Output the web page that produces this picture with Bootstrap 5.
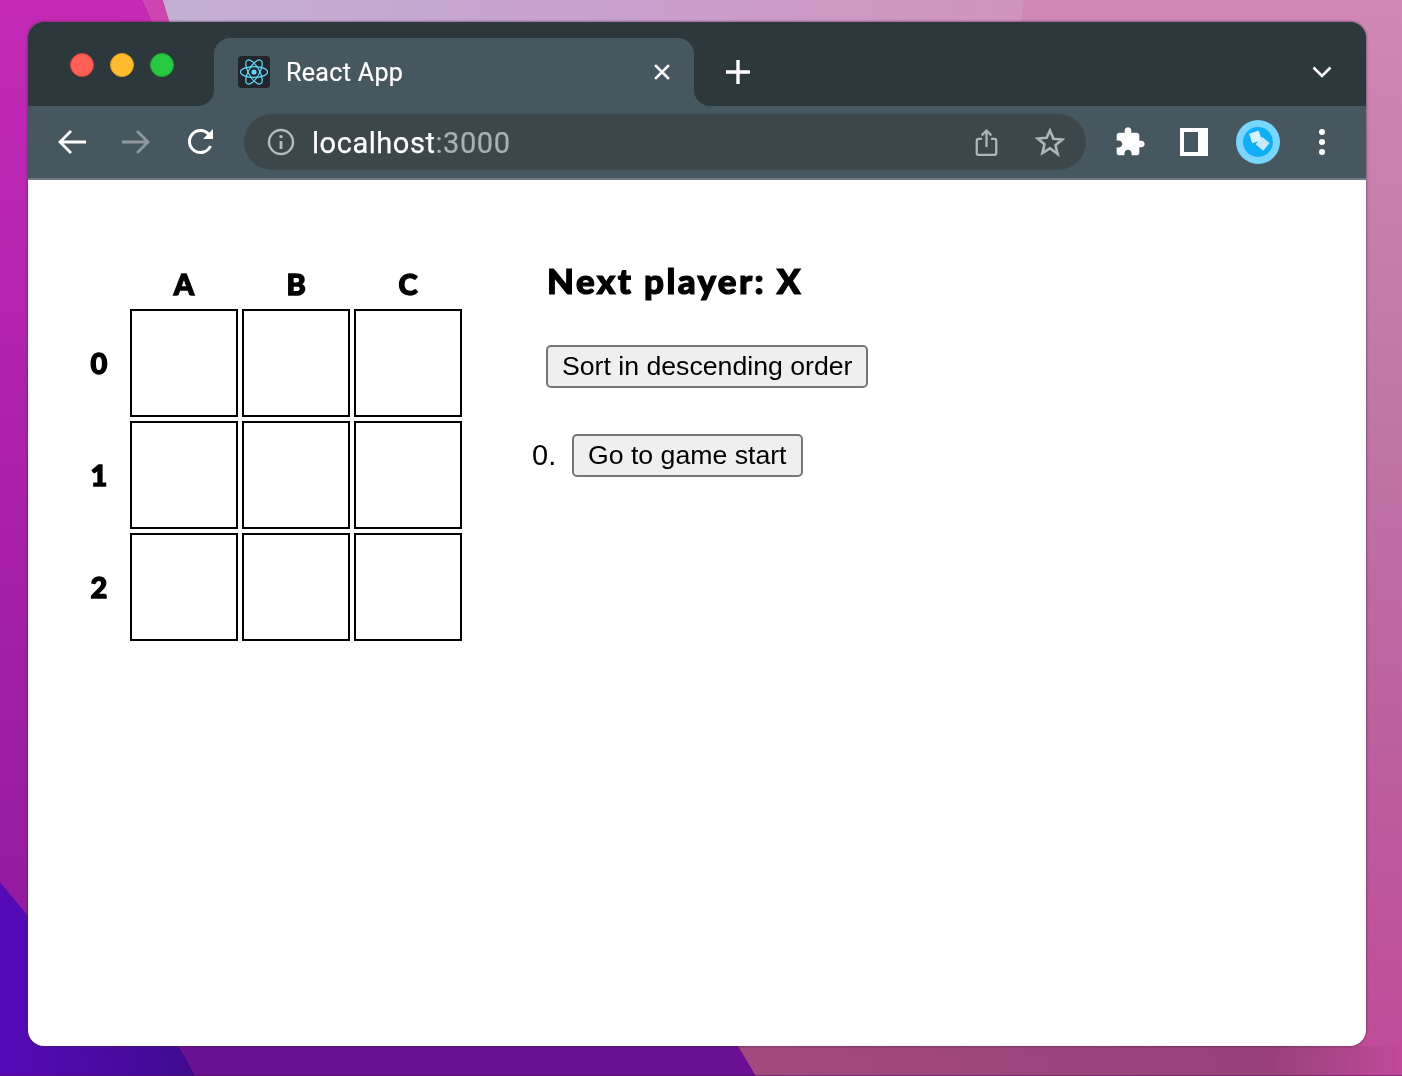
<!DOCTYPE html>
<html lang="en">
<head>
    <meta charset="UTF-8">
    <meta name="viewport" content="width=device-width, initial-scale=1.0">
    <title>React App</title>
    <link rel="stylesheet" href="https://cdn.jsdelivr.net/npm/bootstrap@5.3.0/dist/css/bootstrap.min.css">
    <style>
        html, body { height: 100%; }
        body { background: #a02aa8; padding: 22px 36px 30px 28px; overflow: hidden; }
        .wallpaper { position: fixed; top: 0; left: 0; z-index: -1; }

        .browser { height: 1024px; border-radius: 16px; overflow: hidden; background: #fff; box-shadow: 0 0 2px 1px rgba(70, 40, 70, .45); }

        /* title bar */
        .titlebar { height: 84px; background: linear-gradient(#2d383c 50%, #47575f 50%); }
        .title-left { width: 186px; background: #2d383c; border-bottom-right-radius: 16px; padding: 31px 0 0 42px; }
        .light { width: 24px; height: 24px; border-radius: 50%; }
        .light-red { background: #ff5f57; border: 1px solid #d8413c; }
        .light-yellow { background: #febc2e; border: 1px solid #d99d22; }
        .light-green { background: #28c840; border: 1px solid #1ea832; }
        .tab-item { width: 480px; height: 68px; margin-top: 16px; background: #47575f; border-radius: 16px 16px 0 0; padding: 0 23px 0 24px; color: #fff; font: 400 25px Roboto, sans-serif; }
        .favicon { width: 32px; height: 32px; background: #20262b; border-radius: 4px; margin-right: 16px; }
        .title-right { background: #2d383c; border-bottom-left-radius: 16px; padding: 0 34px 0 32px; }
        .title-text { letter-spacing: .35px; -webkit-text-stroke: .2px #fff; }

        /* toolbar */
        .toolbar { height: 74px; background: #47575f; border-bottom: 2px solid #6d7b82; padding: 8px 12px 0; }
        .tool-slot { width: 64px; height: 56px; }
        .omnibox { width: 842px; height: 56px; margin: 0 12px; background: #3c474c; border-radius: 28px; padding: 0 4px 0 22px; font: 400 29px Roboto, sans-serif; color: #fff; }
        .url-text { margin-left: 16px; padding-top: 1px; letter-spacing: .55px; -webkit-text-stroke: .25px #fff; }
        .url-port { color: #a9b0b3; -webkit-text-stroke: .2px #a9b0b3; }

        /* game */
        .game-area { padding: 80px 0 0 44px; color: #000; }
        .board-grid { display: grid; grid-template-columns: 54px repeat(3, 108px); grid-template-rows: 45px repeat(3, 108px); gap: 4px; }
        .board-label { font: 900 29px Lato, sans-serif; color: #000; -webkit-text-stroke: 1.3px #000; }
        .col-label { padding-top: 2px; }
        .row-label { padding-bottom: 2px; }
        .cell-box { background: #fff; border: 2px solid #000; }
        .game-info { margin-left: 84px; }
        .next-player { font: 900 35px Lato, sans-serif; margin: 0 0 43px 1px; line-height: 42px; letter-spacing: 2.38px; -webkit-text-stroke: 1.2px #000; transform: translateY(-1px); }
        .plain-btn { height: 43px; padding: 0 14px; background: #efefef; border: 2px solid #767676; border-radius: 5px; color: #000; font: 400 26.67px "Liberation Sans", sans-serif; line-height: 1; }
        .moves-list { margin: 46px 0 0 -14px; padding: 0; list-style: none; font: 400 29px "Liberation Sans", sans-serif; }
        .move-num { width: 40px; }
    </style>
</head>
<body>
    <svg class="wallpaper" width="1402" height="1076" viewBox="0 0 1402 1076" aria-hidden="true">
        <defs>
            <linearGradient id="leftSide" x1="0" y1="0" x2="0" y2="1">
                <stop offset="0" stop-color="#c42ab6"/>
                <stop offset=".5" stop-color="#a81fa8"/>
                <stop offset="1" stop-color="#8a1a9c"/>
            </linearGradient>
            <linearGradient id="rightSide" x1="0" y1="0" x2="0" y2="1">
                <stop offset="0" stop-color="#cf88b4"/>
                <stop offset=".35" stop-color="#c078a8"/>
                <stop offset=".7" stop-color="#bc5f9e"/>
                <stop offset="1" stop-color="#c04a98"/>
            </linearGradient>
            <linearGradient id="topBand" x1="0" y1="0" x2="1" y2="0">
                <stop offset="0" stop-color="#c3b0d2"/>
                <stop offset=".5" stop-color="#c8a0cc"/>
                <stop offset="1" stop-color="#d093be"/>
            </linearGradient>
            <linearGradient id="purpleCorner" x1="0" y1="0" x2="1" y2="0">
                <stop offset="0" stop-color="#560ab8"/>
                <stop offset="1" stop-color="#3e0a8e"/>
            </linearGradient>
            <linearGradient id="bottomRight" x1="0" y1="0" x2="1" y2="0">
                <stop offset="0" stop-color="#a24a80"/>
                <stop offset=".8" stop-color="#98407a"/>
                <stop offset="1" stop-color="#c04a98"/>
            </linearGradient>
        </defs>
        <rect width="1402" height="1076" fill="url(#rightSide)"/>
        <rect width="120" height="1076" fill="url(#leftSide)"/>
        <polygon points="120,0 143,0 156,30 120,30" fill="#c42ab6"/>
        <polygon points="143,0 163,0 172,30 156,30" fill="#cf45b0"/>
        <polygon points="163,0 1024,0 1020,30 172,30" fill="url(#topBand)"/>
        <polygon points="0,882 28,916 28,1030 170,1030 196,1076 0,1076" fill="url(#purpleCorner)"/>
        <polygon points="170,1030 730,1030 756,1076 196,1076" fill="#6a1092"/>
        <polygon points="738,1046 1402,1046 1402,1076 756,1076" fill="url(#bottomRight)"/>
        <rect y="1075" width="1402" height="1" fill="#5a0a60" opacity=".5"/>
    </svg>

    <div class="browser d-flex flex-column">
        <div class="titlebar d-flex">
            <div class="title-left d-flex gap-0">
                <div class="light light-red"></div>
                <div class="light light-yellow ms-3"></div>
                <div class="light light-green ms-3"></div>
            </div>
            <div class="tab-item d-flex align-items-center">
                <div class="favicon d-flex align-items-center justify-content-center">
                    <svg width="30" height="30" viewBox="0 0 30 30" fill="none" stroke="#61dafb" stroke-width="1.2">
                        <ellipse cx="15" cy="15" rx="13.5" ry="5.4"/>
                        <ellipse cx="15" cy="15" rx="13.5" ry="5.4" transform="rotate(60 15 15)"/>
                        <ellipse cx="15" cy="15" rx="13.5" ry="5.4" transform="rotate(120 15 15)"/>
                        <circle cx="15" cy="15" r="2.6" fill="#61dafb" stroke="none"/>
                    </svg>
                </div>
                <span class="title-text flex-grow-1">React App</span>
                <svg width="18" height="18" viewBox="0 0 18 18" stroke="#fff" stroke-width="2.6" stroke-linecap="square">
                    <path d="M3 3L15 15M15 3L3 15"/>
                </svg>
            </div>
            <div class="title-right flex-grow-1 d-flex align-items-center justify-content-between pt-3">
                <svg width="24" height="24" viewBox="0 0 24 24" stroke="#fff" stroke-width="3.4" fill="none">
                    <path d="M0 12H24M12 0V24"/>
                </svg>
                <svg width="20" height="12" viewBox="0 0 20 12" stroke="#fff" stroke-width="2.6" fill="none">
                    <path d="M1.5 1.5L10 10L18.5 1.5"/>
                </svg>
            </div>
        </div>

        <div class="toolbar d-flex">
            <div class="tool-slot d-flex align-items-center justify-content-center">
                <svg width="30" height="26" viewBox="0 0 30 26" stroke="#fff" stroke-width="2.8" fill="none">
                    <path d="M29 13H3M14 2L3 13L14 24"/>
                </svg>
            </div>
            <div class="tool-slot d-flex align-items-center justify-content-center">
                <svg width="30" height="26" viewBox="0 0 30 26" stroke="#8e989d" stroke-width="2.8" fill="none">
                    <path d="M1 13H27M16 2L27 13L16 24"/>
                </svg>
            </div>
            <div class="tool-slot d-flex align-items-center justify-content-center">
                <svg width="30" height="30" viewBox="0 0 30 30" fill="none">
                    <path d="M25.5 19a11 11 0 1 1-1.6-11.6" stroke="#fff" stroke-width="3"/>
                    <path d="M28 2v10H18z" fill="#fff"/>
                </svg>
            </div>
            <div class="omnibox d-flex align-items-center">
                <svg width="30" height="30" viewBox="0 0 30 30" fill="none">
                    <circle cx="15" cy="15" r="12" stroke="#b4babd" stroke-width="2.4"/>
                    <path d="M15 14v8" stroke="#b4babd" stroke-width="2.8"/>
                    <circle cx="15" cy="9.6" r="1.7" fill="#b4babd"/>
                </svg>
                <span class="url-text flex-grow-1">localhost<span class="url-port">:3000</span></span>
                <div class="tool-slot d-flex align-items-center justify-content-center">
                    <svg width="23" height="29" viewBox="0 0 26 32" fill="none" stroke="#aeb4b7" stroke-width="2.6">
                        <path d="M8 12H4a2 2 0 0 0-2 2v14a2 2 0 0 0 2 2h18a2 2 0 0 0 2-2V14a2 2 0 0 0-2-2h-4"/>
                        <path d="M13 21V3M7.5 8L13 2.5L18.5 8"/>
                    </svg>
                </div>
                <div class="tool-slot d-flex align-items-center justify-content-center">
                    <svg width="30" height="30" viewBox="0 0 30 30" fill="none" stroke="#aeb4b7" stroke-width="2.6" stroke-linejoin="miter">
                        <path d="M15 3.5l3.4 8.3 8.9.7-6.8 5.8 2.1 8.7L15 21.3 7.4 26l2.1-8.7-6.8-5.8 8.9-.7z"/>
                    </svg>
                </div>
            </div>
            <div class="tool-slot d-flex align-items-center justify-content-center">
                <svg width="32" height="32" viewBox="0 0 24 24" fill="#fff">
                    <path d="M20.5 11H19V7c0-1.1-.9-2-2-2h-4V3.5C13 2.12 11.88 1 10.5 1S8 2.12 8 3.5V5H4c-1.1 0-1.99.9-1.99 2v3.8H3.5c1.49 0 2.7 1.21 2.7 2.7s-1.21 2.7-2.7 2.7H2V20c0 1.1.9 2 2 2h3.8v-1.5c0-1.49 1.21-2.7 2.7-2.7 1.49 0 2.7 1.21 2.7 2.7V22H17c1.1 0 2-.9 2-2v-4h1.5c1.38 0 2.5-1.12 2.5-2.5S21.88 11 20.5 11z"/>
                </svg>
            </div>
            <div class="tool-slot d-flex align-items-center justify-content-center">
                <svg width="28" height="28" viewBox="0 0 28 28">
                    <rect width="28" height="28" fill="#fff"/>
                    <rect x="4" y="4" width="14" height="20" fill="#47575f"/>
                </svg>
            </div>
            <div class="tool-slot d-flex align-items-center justify-content-center">
                <svg width="44" height="44" viewBox="0 0 44 44">
                    <circle cx="22" cy="22" r="22" fill="#78d6ff"/>
                    <circle cx="22" cy="22" r="15" fill="#10aef5"/>
                    <rect x="14.5" y="12" width="10" height="10" fill="#d6f1ff" transform="rotate(-18 19 17)"/>
                    <rect x="21.5" y="19" width="10" height="10" fill="#c4ebff" transform="rotate(40 27 24)"/>
                </svg>
            </div>
            <div class="tool-slot d-flex align-items-center justify-content-center">
                <svg width="8" height="30" viewBox="0 0 8 30" fill="#fff">
                    <circle cx="4" cy="5" r="3"/>
                    <circle cx="4" cy="15" r="3"/>
                    <circle cx="4" cy="25" r="3"/>
                </svg>
            </div>
        </div>

        <div class="game-area d-flex flex-grow-1">
            <div class="board-grid">
                <div></div>
                <div class="board-label col-label d-flex align-items-center justify-content-center">A</div>
                <div class="board-label col-label d-flex align-items-center justify-content-center">B</div>
                <div class="board-label col-label d-flex align-items-center justify-content-center">C</div>
                <div class="board-label row-label d-flex align-items-center justify-content-center">0</div>
                <div class="cell-box"></div><div class="cell-box"></div><div class="cell-box"></div>
                <div class="board-label row-label d-flex align-items-center justify-content-center">1</div>
                <div class="cell-box"></div><div class="cell-box"></div><div class="cell-box"></div>
                <div class="board-label row-label d-flex align-items-center justify-content-center">2</div>
                <div class="cell-box"></div><div class="cell-box"></div><div class="cell-box"></div>
            </div>
            <div class="game-info">
                <div class="next-player">Next player: X</div>
                <button class="plain-btn" type="button">Sort in descending order</button>
                <ol class="moves-list">
                    <li class="d-flex align-items-center">
                        <span class="move-num">0.</span>
                        <button class="plain-btn" type="button">Go to game start</button>
                    </li>
                </ol>
            </div>
        </div>
    </div>
</body>
</html>
